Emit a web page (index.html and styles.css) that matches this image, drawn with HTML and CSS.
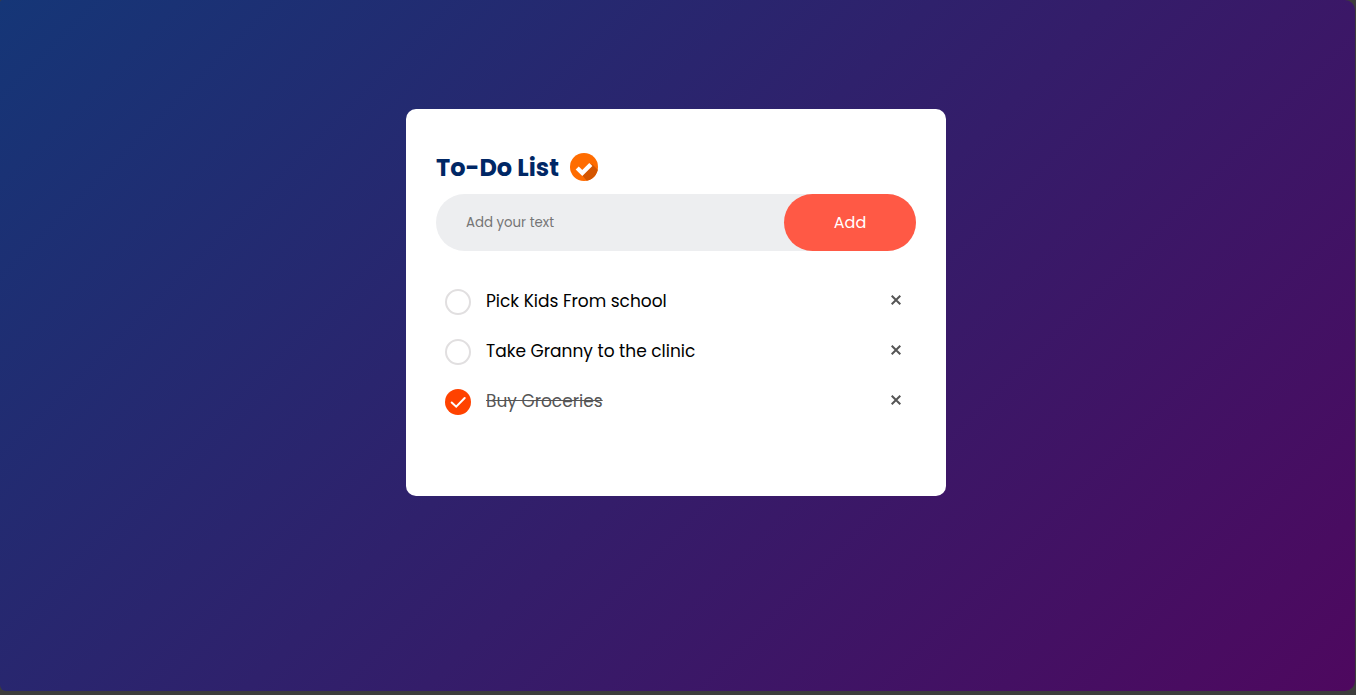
FILE: index.html
```html
<!DOCTYPE html>
<html lang="en">
<head>
<meta charset="utf-8">
<meta name="viewport" content="width=device-width, initial-scale=1">
<title>To-Do List</title>
<link rel="stylesheet" href="styles.css">
</head>
<body>
<main class="container">
  <section class="todo-app">
    <h1 class="title">To-Do List
      <svg class="title-icon" viewBox="0 0 28 28" aria-hidden="true">
        <defs><clipPath id="disc"><circle cx="14" cy="14" r="14"/></clipPath></defs>
        <circle cx="14" cy="14" r="14" fill="#ff6c00"/>
        <path clip-path="url(#disc)" d="M22 11 34 23 25 38 12 22Z" fill="#d45500"/>
        <path d="M7.200 15 12.300 20 20.800 11.500" fill="none" stroke="#fff" stroke-width="4.400"/>
      </svg>
    </h1>
    <form class="row">
      <input class="task-input" type="text" placeholder="Add your text" aria-label="New task">
      <button class="add-button" type="button">Add</button>
    </form>
    <ul class="tasks">
      <li class="task">
        <label class="task-label"><input class="check" type="checkbox"><span class="task-text">Pick Kids From school</span></label>
        <button class="remove" type="button" aria-label="Remove Pick Kids From school"><svg class="cross" viewBox="0 0 10 10"><path d="M.7.700 9.300 9.300M9.300.700.700 9.300"/></svg></button>
      </li>
      <li class="task">
        <label class="task-label"><input class="check" type="checkbox"><span class="task-text">Take Granny to the clinic</span></label>
        <button class="remove" type="button" aria-label="Remove Take Granny to the clinic"><svg class="cross" viewBox="0 0 10 10"><path d="M.7.700 9.300 9.300M9.300.700.700 9.300"/></svg></button>
      </li>
      <li class="task">
        <label class="task-label"><span class="check-box"><input class="check" type="checkbox" checked><svg class="tick" viewBox="0 0 26 26" aria-hidden="true"><path d="M6.700 13.500 11.200 17.700 19.700 9"/></svg></span><span class="task-text">Buy Groceries</span></label>
        <button class="remove" type="button" aria-label="Remove Buy Groceries"><svg class="cross" viewBox="0 0 10 10"><path d="M.7.700 9.300 9.300M9.300.700.700 9.300"/></svg></button>
      </li>
    </ul>
  </section>
</main>
</body>
</html>
```
FILE: styles.css
```css
* {
  box-sizing: border-box;
  margin: 0;
  padding: 0;
  font-family: Poppins, Inter, "Open Sans", sans-serif;
}

body {
  min-height: 100vh;
  display: flex;
  padding: 0 1px 4px 0;
  background: #3c3c3c;
}

.container {
  flex: 1;
  padding: 109px 12px 20px 9px;
  border-radius: 2px 10px 10px 6px;
  background: linear-gradient(135deg, #153677, #4e085f);
}

.todo-app {
  max-width: 540px;
  margin: 0 auto;
  padding: 40px 30px 70px;
  border-radius: 10px;
  background: #fff;
}

.title {
  display: flex;
  align-items: center;
  gap: 11px;
  height: 36px;
  margin-bottom: 9px;
  color: #002765;
  font-size: 24px;
  font-weight: 700;
}

.title-icon {
  width: 28px;
  height: 28px;
}

.row {
  display: flex;
  height: 57px;
  margin-bottom: 25px;
  border-radius: 30px;
  background: #edeef0;
}

.task-input {
  flex: 1;
  min-width: 0;
  padding: 0 30px;
  border: 0;
  outline: 0;
  background: transparent;
}

.task-input::placeholder {
  color: #757575;
}

.add-button {
  width: 132px;
  border: 0;
  border-radius: 30px;
  background: #ff5945;
  color: #fff;
  font-size: 16px;
}

.tasks {
  list-style: none;
}

.task {
  display: flex;
  align-items: center;
  height: 50px;
}

.task-label {
  flex: 1;
  display: flex;
  align-items: center;
  gap: 15px;
  padding: 2px 0 0 9px;
}

.check-box {
  display: grid;
}

.check {
  appearance: none;
  width: 26px;
  height: 26px;
  border: 2px solid #e1dfe0;
  border-radius: 50%;
}

.check:checked {
  grid-area: 1 / 1;
  border: 0;
  background: #ff4200;
}

.tick {
  grid-area: 1 / 1;
  width: 26px;
  height: 26px;
  fill: none;
  stroke: #fff;
  stroke-width: 2;
  stroke-linecap: round;
}

.task-text {
  padding-bottom: 2px;
  color: #000;
  font-size: 17px;
}

.task-label:has(:checked) .task-text {
  color: #555;
  text-decoration: line-through;
}

.remove {
  display: grid;
  place-items: center;
  width: 40px;
  height: 40px;
  padding-bottom: 2px;
  border: 0;
  background: transparent;
}

.cross {
  width: 10px;
  height: 10px;
  fill: none;
  stroke: #555;
  stroke-width: 2;
}
```
